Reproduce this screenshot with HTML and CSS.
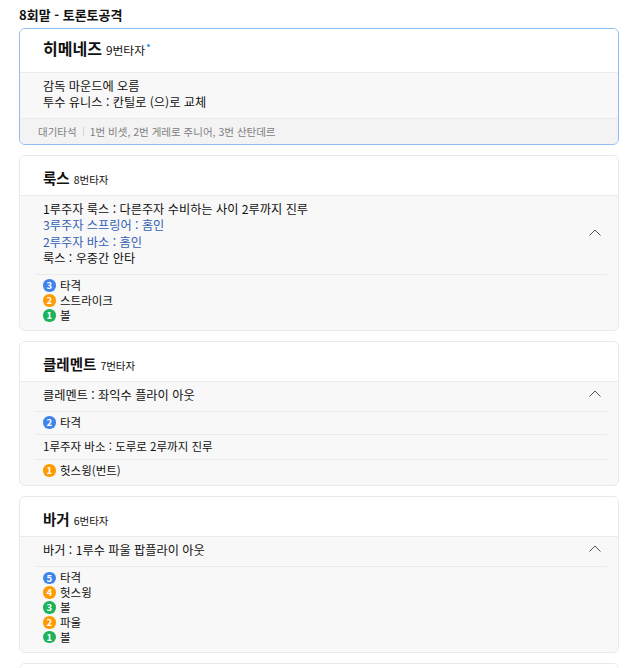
FILE: index.html
```html
<!DOCTYPE html>
<html lang="ko">
<head>
<meta charset="utf-8">
<title>8회말 - 토론토공격</title>
<link rel="stylesheet" href="styles.css">
</head>
<body>
<div class="wrap">
  <h2 class="inning-title">8회말 - 토론토공격</h2>

  <section class="card card-current">
    <header class="card-head">
      <span class="name">히메네즈</span><span class="order">9번타자</span><span class="live-dot"></span>
    </header>
    <div class="card-body">
      <div class="group events">
        <div class="lines">
          <p class="line">감독 마운드에 오름</p>
          <p class="line">투수 유니스 : 칸틸로 (으)로 교체</p>
        </div>
      </div>
    </div>
    <footer class="card-foot">
      <span class="foot-label">대기타석</span><span class="foot-sep"></span><span class="foot-text">1번 비셋, 2번 게레로 주니어, 3번 산탄데르</span>
    </footer>
  </section>

  <section class="card">
    <header class="card-head">
      <span class="name">룩스</span><span class="order">8번타자</span>
    </header>
    <div class="card-body">
      <div class="group events">
        <div class="lines">
          <p class="line">1루주자 룩스 : 다른주자 수비하는 사이 2루까지 진루</p>
          <p class="line score">3루주자 스프링어 : 홈인</p>
          <p class="line score">2루주자 바소 : 홈인</p>
          <p class="line">룩스 : 우중간 안타</p>
        </div>
        <svg class="chevron" width="12" height="7" viewBox="0 0 12 7"><polyline points="0.5,6.5 6,1 11.5,6.5" fill="none" stroke="#555" stroke-width="1"/></svg>
      </div>
      <div class="group pitches">
        <p class="pitch"><span class="badge b-blue">3</span>타격</p>
        <p class="pitch"><span class="badge b-orange">2</span>스트라이크</p>
        <p class="pitch"><span class="badge b-green">1</span>볼</p>
      </div>
    </div>
  </section>

  <section class="card">
    <header class="card-head">
      <span class="name">클레멘트</span><span class="order">7번타자</span>
    </header>
    <div class="card-body">
      <div class="group events">
        <div class="lines">
          <p class="line">클레멘트 : 좌익수 플라이 아웃</p>
        </div>
        <svg class="chevron" width="12" height="7" viewBox="0 0 12 7"><polyline points="0.5,6.5 6,1 11.5,6.5" fill="none" stroke="#555" stroke-width="1"/></svg>
      </div>
      <div class="group pitches">
        <p class="pitch"><span class="badge b-blue">2</span>타격</p>
      </div>
      <div class="group plain">
        <p class="sub-line">1루주자 바소 : 도루로 2루까지 진루</p>
      </div>
      <div class="group pitches">
        <p class="pitch"><span class="badge b-orange">1</span>헛스윙(번트)</p>
      </div>
    </div>
  </section>

  <section class="card">
    <header class="card-head">
      <span class="name">바거</span><span class="order">6번타자</span>
    </header>
    <div class="card-body">
      <div class="group events">
        <div class="lines">
          <p class="line">바거 : 1루수 파울 팝플라이 아웃</p>
        </div>
        <svg class="chevron" width="12" height="7" viewBox="0 0 12 7"><polyline points="0.5,6.5 6,1 11.5,6.5" fill="none" stroke="#555" stroke-width="1"/></svg>
      </div>
      <div class="group pitches">
        <p class="pitch"><span class="badge b-blue">5</span>타격</p>
        <p class="pitch"><span class="badge b-orange">4</span>헛스윙</p>
        <p class="pitch"><span class="badge b-green">3</span>볼</p>
        <p class="pitch"><span class="badge b-orange">2</span>파울</p>
        <p class="pitch"><span class="badge b-green">1</span>볼</p>
      </div>
    </div>
  </section>

  <section class="card">
    <header class="card-head">
      <span class="name">8회말 토론토 공격</span>
    </header>
    <div class="card-body">
      <div class="group events">
        <div class="lines">
          <p class="line">투수 로드리게스 : 등판</p>
        </div>
      </div>
    </div>
  </section>
</div>
</body>
</html>
```
FILE: styles.css
```css
* { box-sizing: border-box; }
html, body { margin: 0; padding: 0; background: #fff; }
body {
  font-family: "Noto Sans CJK KR", "Noto Sans", "Liberation Sans", sans-serif;
  color: #111;
}
p { margin: 0; }
.wrap { padding: 6px 17px 0 19px; }
.inning-title {
  margin: 0 0 5px;
  font-size: 13px;
  line-height: 17px;
  font-weight: 700;
  color: #111;
}
.card {
  border: 1px solid #e9e9e9;
  border-radius: 6px;
  overflow: hidden;
  margin-bottom: 10px;
  background: #f8f8f8;
}
.card-current { border-color: #8fbdf7; }
.card-head {
  display: block;
  background: #fff;
  height: 40px;
  padding: 11px 23px 0;
  line-height: 20px;
  border-bottom: 1px solid #ececec;
  white-space: nowrap;
  overflow: hidden;
}
.card-current .card-head { height: 44px; padding-top: 8px; line-height: 22px; }
.name { font-size: 14.5px; font-weight: 700; color: #111; }
.card-current .name { font-size: 16px; }
.order { font-size: 10.5px; margin-left: 4px; color: #111; }
.card-current .order { font-size: 11.8px; }
.live-dot {
  display: inline-block;
  width: 3px; height: 3px; border-radius: 50%;
  background: #3d9bf2;
  vertical-align: 8px;
  margin-left: 2px;
}
.card-body { padding: 0 11px 3px 15px; }
.card-current .card-body { padding-bottom: 0; }
.group {
  padding: 3.5px 6px 4px 8px;
  border-top: 1px solid #ebebeb;
  font-size: 11.5px;
}
.group.events {
  border-top: 0;
  padding-top: 5px;
  padding-bottom: 7.5px;
  display: flex;
  align-items: center;
  justify-content: space-between;
}
.line { line-height: 16.3px; font-size: 12.2px; }
.line.score { color: #3360b6; }
.sub-line { line-height: 16.3px; }
.chevron { display: block; margin-top: -3px; flex: none; }
.pitch {
  display: flex;
  align-items: center;
  line-height: 14.85px;
}
.badge {
  width: 12.5px; height: 12.5px;
  border-radius: 50%;
  color: #fff;
  font-size: 9.5px;
  font-weight: 700;
  line-height: 12.5px;
  text-align: center;
  margin-right: 4.5px;
  flex: none;
}
.b-blue { background: #3f84ec; }
.b-orange { background: #ff9a00; }
.b-green { background: #1db35a; }
.card-foot {
  background: #f3f3f3;
  border-top: 1px solid #ebebeb;
  padding: 0 18px;
  height: 26px;
  display: flex;
  align-items: center;
  font-size: 10.5px;
  color: #808080;
}
.foot-sep {
  width: 1px; height: 9px; background: #d4d4d4;
  margin: 0 6px 0 6px;
}
```
